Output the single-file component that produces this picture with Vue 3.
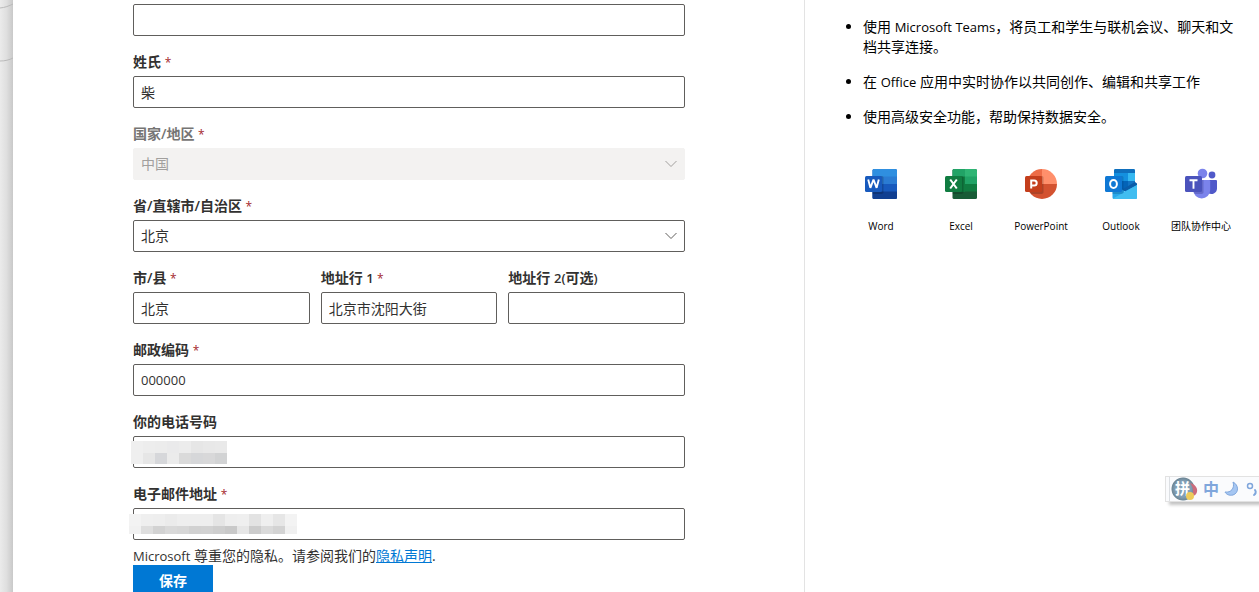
<script setup>
import { ref } from 'vue'

const given = ref('')
const surname = ref('柴')
const country = ref('中国')
const province = ref('北京')
const city = ref('北京')
const line1 = ref('北京市沈阳大街')
const line2 = ref('')
const zip = ref('000000')
const phone = ref('')
const email = ref('')

const phoneMask = [
  ['#efefef', '#ededed', '#ececec', '#eaeaeb', '#ececec', '#e6e6e6', '#e8e8e8', '#e9e9e9'],
  ['#efefef', '#e6e6e6', '#d6d7da', '#ebebeb', '#dadada', '#d6d7d9', '#d8d8d9', '#d2d3d4'],
]
const emailMask = [
  ['#f3f3f3', '#efefef', '#eeeeee', '#ebebeb', '#eeeeee', '#eeeeee', '#eeeeee', '#e5e5e5', '#eeeeee', '#efefef', '#e3e3e3', '#efefef', '#e6e6e6', '#f3f3f3'],
  ['#f1f1f1', '#dedede', '#d2d2d2', '#d9d9d9', '#d7d7d7', '#d1d1d1', '#d2d2d2', '#cecece', '#c9c9c9', '#e6e6e6', '#cccccc', '#dadada', '#d3d3d3', '#f0f0f0'],
]
</script>

<template>
  <div class="page">
    <div class="gutter">
      <svg width="13" height="70" viewBox="0 0 13 70" fill="none" aria-hidden="true">
        <path d="M0 8C5 7.500 9 6 13 4M0 61C5 61 9 60 13 58" stroke="#b9b9b9" />
      </svg>
    </div>

    <main class="panel">
      <form class="form" @submit.prevent>
        <div class="field">
          <input v-model="given" class="box" type="text" aria-label="名字">
        </div>
        <div class="field">
          <label for="surname">姓氏 <span class="req">*</span></label>
          <input id="surname" v-model="surname" class="box" type="text">
        </div>
        <div class="field off">
          <label for="country">国家/地区 <span class="req">*</span></label>
          <div class="pick">
            <select id="country" v-model="country" class="box" disabled><option>中国</option></select>
            <svg class="chev" viewBox="0 0 12 8" fill="none" aria-hidden="true"><path d="M.5 1 6 6.500 11.500 1" stroke="currentColor" /></svg>
          </div>
        </div>
        <div class="field">
          <label for="province">省/直辖市/自治区 <span class="req">*</span></label>
          <div class="pick">
            <select id="province" v-model="province" class="box"><option>北京</option></select>
            <svg class="chev" viewBox="0 0 12 8" fill="none" aria-hidden="true"><path d="M.5 1 6 6.500 11.500 1" stroke="currentColor" /></svg>
          </div>
        </div>
        <div class="trio">
          <div class="field">
            <label for="city">市/县 <span class="req">*</span></label>
            <input id="city" v-model="city" class="box" type="text">
          </div>
          <div class="field">
            <label for="line1">地址行 <span class="latin">1 </span><span class="req">*</span></label>
            <input id="line1" v-model="line1" class="box" type="text">
          </div>
          <div class="field">
            <label for="line2">地址行 <span class="latin">2(</span>可选<span class="latin">)</span></label>
            <input id="line2" v-model="line2" class="box" type="text">
          </div>
        </div>
        <div class="field">
          <label for="zip">邮政编码 <span class="req">*</span></label>
          <input id="zip" v-model="zip" class="box digits" type="text">
        </div>
        <div class="field">
          <label for="phone">你的电话号码</label>
          <div class="pick">
            <input id="phone" v-model="phone" class="box" type="tel">
            <svg class="mask phone" width="96" height="23" viewBox="0 0 96 23" shape-rendering="crispEdges" aria-hidden="true">
              <g v-for="(row, r) in phoneMask" :key="r">
                <rect v-for="(c, i) in row" :key="i" :x="i * 12" :y="r * 12" width="12" :height="12 - r" :fill="c" />
              </g>
            </svg>
          </div>
        </div>
        <div class="field">
          <label for="email">电子邮件地址 <span class="req">*</span></label>
          <div class="pick">
            <input id="email" v-model="email" class="box" type="email">
            <svg class="mask email" width="168" height="20" viewBox="0 0 168 20" shape-rendering="crispEdges" aria-hidden="true">
              <g v-for="(row, r) in emailMask" :key="r">
                <rect v-for="(c, i) in row" :key="i" :x="i * 12" :y="r * 12" width="12" :height="12 - r * 4" :fill="c" />
              </g>
            </svg>
          </div>
        </div>
        <p class="privacy"><span class="latin">Microsoft</span> 尊重您的隐私。请参阅我们的<a href="#privacy">隐私声明</a>.</p>
        <button class="save" type="submit">保存</button>
      </form>
    </main>

    <aside class="side">
      <ul class="points">
        <li>使用 <span class="latin">Microsoft Teams</span>，将员工和学生与联机会议、聊天和文档共享连接。</li>
        <li>在 <span class="latin">Office</span> 应用中实时协作以共同创作、编辑和共享工作</li>
        <li>使用高级安全功能，帮助保持数据安全。</li>
      </ul>
      <div class="apps">
        <div class="app">
          <svg class="logo" viewBox="0 0 32 32" aria-hidden="true">
            <rect x="7.500" y="1" width="24.500" height="30" rx="1.500" fill="#185abd" />
            <path d="M9 1h21.500A1.500 1.500 0 0 1 32 2.500V9H7.500V2.500A1.500 1.500 0 0 1 9 1z" fill="#2f8fe0" />
            <path d="M7.500 8.500H32V16H7.500z" fill="#2b7cd3" />
            <path d="M7.500 23.500H32v6a1.500 1.500 0 0 1-1.500 1.500H9a1.500 1.500 0 0 1-1.500-1.500z" fill="#103f91" />
            <path d="M7.500 8H17a1.500 1.500 0 0 1 1.500 1.500v14A2 2 0 0 1 16.500 26h-9z" fill="#000" opacity=".18" />
            <rect y="8" width="17" height="16" rx="1.500" fill="#185abd" />
            <path d="m3.200 11.500 2.200 8.300 3.100-8.300 3.100 8.300 2.200-8.300" fill="none" stroke="#fff" stroke-width="1.900" stroke-linejoin="bevel" />
          </svg>
          <span>Word</span>
        </div>
        <div class="app">
          <svg class="logo" viewBox="0 0 32 32" aria-hidden="true">
            <rect x="7.500" y="1" width="24.500" height="30" rx="1.500" fill="#185c37" />
            <path d="M9 1h11v8H7.500V2.500A1.500 1.500 0 0 1 9 1z" fill="#21a366" />
            <path d="M20 1h10.500A1.500 1.500 0 0 1 32 2.500V9H20z" fill="#2fb574" />
            <path d="M7.500 8.500H20V24H7.500z" fill="#107c41" />
            <path d="M20 8.500h12V16H20z" fill="#21a366" />
            <path d="M20 16h12v7.500H20z" fill="#107c41" />
            <path d="M7.500 8H17a1.500 1.500 0 0 1 1.500 1.500v14A2 2 0 0 1 16.500 26h-9z" fill="#000" opacity=".18" />
            <rect y="8" width="17" height="16" rx="1.500" fill="#107c41" />
            <path d="m5.200 11.500 6.600 9m0-9-6.600 9" fill="none" stroke="#fff" stroke-width="2.100" />
          </svg>
          <span>Excel</span>
        </div>
        <div class="app">
          <svg class="logo" viewBox="0 0 32 32" aria-hidden="true">
            <path d="M17 1a15 15 0 0 0-15 15l15 1z" fill="#ed6c47" />
            <path d="M17 1a15 15 0 0 1 15 15l-15 1z" fill="#ff8f6b" />
            <path d="M2 16h30a15 15 0 0 1-30 0z" fill="#d35230" />
            <path d="M4.700 8H17a1.500 1.500 0 0 1 1.500 1.500v14A2 2 0 0 1 16.500 26H6.300A15 15 0 0 1 4.700 8z" fill="#000" opacity=".18" />
            <rect y="8" width="17" height="16" rx="1.500" fill="#c43e1c" />
            <path d="M6.200 20.500v-8h3a2.400 2.400 0 0 1 0 5h-3" fill="none" stroke="#fff" stroke-width="2" />
          </svg>
          <span>PowerPoint</span>
        </div>
        <div class="app">
          <svg class="logo" viewBox="0 0 32 32" aria-hidden="true">
            <rect x="9" y="1" width="21" height="22" rx="1.500" fill="#1490df" />
            <path d="M10.500 1h18A1.500 1.500 0 0 1 30 2.500V5H9V2.500A1.500 1.500 0 0 1 10.500 1z" fill="#0f6fbd" />
            <path d="M23 5h7v8h-7z" fill="#35b8f1" />
            <path d="M16 13h7v8h-7z" fill="#0364b8" />
            <path d="M23 13h7v3l-7 5z" fill="#1173c4" />
            <path d="m30 14 2 1.500v2L21 24l-4-2.500z" fill="#0a5ca8" />
            <path d="m7.500 16 12.200 7.500L32 17v12.500a1.500 1.500 0 0 1-1.500 1.500H9a1.500 1.500 0 0 1-1.500-1.500z" fill="#28a8ea" />
            <path d="M32 17 8 30.600c.4.300.7.400 1 .4h21.500a1.500 1.500 0 0 0 1.500-1.500z" fill="#40bdf0" />
            <path d="M7.500 8H17a1.500 1.500 0 0 1 1.500 1.500v14A2 2 0 0 1 16.500 26h-9z" fill="#003d70" opacity=".25" />
            <rect y="8" width="17" height="16" rx="1.500" fill="#0f78d4" />
            <ellipse cx="8.500" cy="16" rx="3.400" ry="3.900" fill="none" stroke="#fff" stroke-width="2" />
          </svg>
          <span>Outlook</span>
        </div>
        <div class="app">
          <svg class="logo" viewBox="0 0 32 32" aria-hidden="true">
            <circle cx="27" cy="7" r="3.400" fill="#5059c9" />
            <path d="M22 12h9a1 1 0 0 1 1 1v7.500a5.500 5.500 0 0 1-9 4.200z" fill="#5059c9" />
            <circle cx="17.500" cy="5.500" r="4.800" fill="#7b83eb" />
            <path d="M10 12h14a1.200 1.200 0 0 1 1.200 1.200V22a8.500 8.500 0 0 1-17 0v-9z" fill="#7b83eb" />
            <path d="M8.500 12H18.500v11.500a2 2 0 0 1-2 2.500H9.700a9 9 0 0 1-1.200-4z" fill="#2d337f" opacity=".3" />
            <rect y="8" width="17" height="16" rx="1.500" fill="#4b53bc" />
            <path d="M4.500 12.300h8M8.500 12.300v8.500" fill="none" stroke="#fff" stroke-width="1.900" />
          </svg>
          <span>团队协作中心</span>
        </div>
      </div>
    </aside>

    <div class="ime">
      <span class="globe">拼
        <svg viewBox="0 0 14 20" aria-hidden="true"><path d="M6 2c5 1 8 5 7 9-1 3-3 4-5 4 2-5 1-9-2-13z" fill="#cc6b7c" /><circle cx="6" cy="15" r="4" fill="#edcb5b" /></svg>
      </span>
      <span class="mode">中</span>
      <svg width="15" height="16" viewBox="0 0 15 16" aria-hidden="true"><path d="M9 1c6 3 6 11 0 13-4 1-7-1-8-3 6 1 10-4 8-10z" fill="#a5c6f2" stroke="#7fa6dc" /></svg>
      <svg class="punct" width="12" height="16" viewBox="0 0 12 16" fill="none" aria-hidden="true"><circle cx="4" cy="5" r="2.500" stroke="#7fa6dc" stroke-width="1.500" /><path d="M9 9c1.500 2 .5 4-1 5" stroke="#7fa6dc" stroke-width="2" stroke-linecap="round" /></svg>
    </div>
  </div>
</template>

<style>
body {
  margin: 0;
  background: #fff;
}
</style>

<style scoped>
.page {
  position: relative;
  display: grid;
  grid-template-columns: 13px minmax(0, 1fr) 454px;
  height: 100vh;
  overflow: hidden;
  font: 14px/20px "Open Sans", "Noto Sans CJK SC", sans-serif;
  color: #323130;
}
.page * {
  box-sizing: border-box;
}
.latin {
  font-size: 13px;
  line-height: 16px;
}
.gutter {
  background: linear-gradient(90deg, #ebebeb, #dfdfdf 50%, #c9c9c9);
}
.gutter svg {
  display: block;
}
.panel {
  padding: 4px 120px 0;
  border-right: 1px solid #e3e3e3;
}
.form {
  display: flex;
  flex-direction: column;
  gap: 16px;
  margin-right: -1px;
}
.field {
  display: flex;
  flex-direction: column;
  gap: 4px;
  min-width: 0;
}
label {
  font-weight: 600;
  white-space: nowrap;
}
.req {
  font-size: 12px;
  font-weight: 400;
  line-height: 12px;
  color: #a4262c;
}
.off label {
  color: #767574;
}
.box {
  display: block;
  width: 100%;
  height: 32px;
  margin: 0;
  padding: 0 7px;
  border: 1px solid #605e5c;
  border-radius: 2px;
  background: #fff;
  font: inherit;
  color: inherit;
  appearance: none;
  outline: none;
}
.digits {
  font-size: 13px;
}
.off .box {
  border-color: #f3f2f1;
  background: #f3f2f1;
  color: #a19f9d;
  opacity: 1;
}
.pick {
  position: relative;
}
.chev {
  position: absolute;
  top: 12px;
  right: 8px;
  width: 12px;
  height: 8px;
  color: #605e5c;
  pointer-events: none;
}
.off .chev {
  color: #a19f9d;
}
.mask {
  position: absolute;
  pointer-events: none;
}
.phone {
  top: 5px;
  left: -2px;
}
.email {
  top: 6px;
  left: -4px;
}
.trio {
  display: grid;
  grid-template-columns: repeat(3, minmax(0, 1fr));
  gap: 11px;
}
.privacy {
  margin: -9px 0 -16px;
  line-height: 18px;
}
.privacy a {
  color: #0078d4;
}
.save {
  width: 80px;
  height: 32px;
  padding: 0;
  border: 0;
  background: #0078d4;
  font: inherit;
  font-weight: 700;
  color: #fff;
}
.side {
  padding: 17px 18px 0 36px;
  color: #000;
}
.points {
  display: flex;
  flex-direction: column;
  gap: 15px;
  margin: 0;
  padding-left: 22px;
}
.apps {
  display: grid;
  grid-template-columns: repeat(5, minmax(0, 1fr));
  margin-top: 41px;
}
.app {
  display: flex;
  flex-direction: column;
  align-items: center;
  gap: 18px;
  font-size: 10px;
  line-height: 16px;
  white-space: nowrap;
}
.logo {
  width: 32px;
  height: 32px;
}
.ime {
  position: absolute;
  top: 476px;
  right: 0;
  display: flex;
  align-items: center;
  gap: 5px;
  width: 94px;
  height: 26px;
  padding-left: 5px;
  border: 1px solid #e2e2e2;
  border-right: 0;
  background: linear-gradient(90deg, #fafbfd 3px, #dcdfe3 3px 4px, #fafbfd 4px);
  box-shadow: 4px 3px 3px #c4c4c4;
  color: #7fa6dc;
}
.globe {
  position: relative;
  flex: none;
  width: 27px;
  height: 24px;
  padding-left: 4px;
  border-radius: 12px;
  background: radial-gradient(circle at 12px 12px, #829fb6 0 8px, #6e8796 11px, transparent 12px);
  font-size: 15px;
  font-weight: 700;
  line-height: 22px;
  color: #fff;
}
.globe svg {
  position: absolute;
  top: 4px;
  right: 0;
  width: 14px;
  height: 20px;
}
.mode {
  font-size: 16px;
  font-weight: 700;
}
.ime > svg {
  flex: none;
}
.punct {
  margin-left: 2px;
}
</style>
